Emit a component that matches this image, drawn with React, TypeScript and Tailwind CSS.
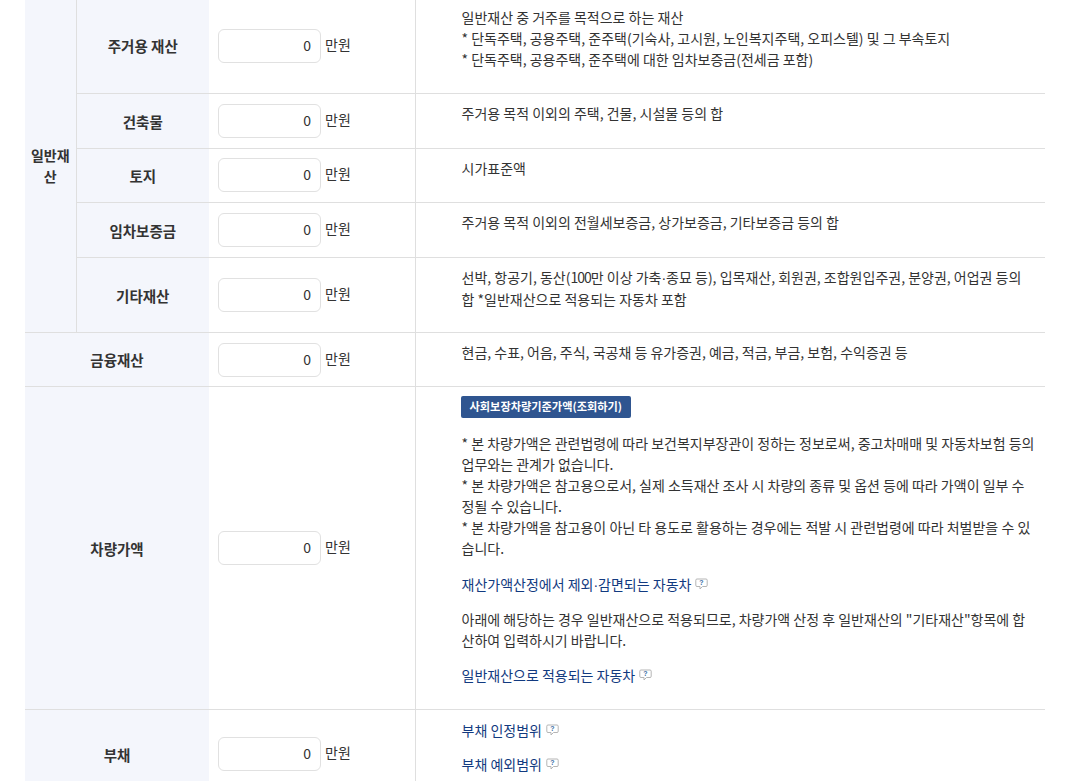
const font = "font-['Noto_Sans_CJK_KR','Noto_Sans',sans-serif]";

function Money() {
  return (
    <div className="flex items-center">
      <input
        readOnly
        value="0"
        className="w-[103px] h-[34px] rounded-[6px] border border-[#e1e1e1] bg-white pl-[9px] pr-[9px] pb-[2px] text-right text-[14px] text-[#333] outline-none"
      />
      <span className="ml-1 mb-[3px] text-[14px] text-[#333]">만원</span>
    </div>
  );
}

function Help() {
  return (
    <svg width="13" height="12" viewBox="0 0 13 12" className="ml-[4px] inline-block align-[0px]" fill="none">
      <path d="M2 1h9a1.200 1.200 0 0 1 1.200 1.200v5A1.200 1.200 0 0 1 11 8.500H7.500L5 11V8.500H2A1.200 1.200 0 0 1 .8 7.200v-5A1.200 1.200 0 0 1 2 1Z" stroke="#b5b5b5" strokeWidth="1" />
      <text x="6.500" y="7.300" textAnchor="middle" fontSize="7" fontWeight="700" fill="#3a6ea5" fontFamily="Liberation Sans, sans-serif">?</text>
    </svg>
  );
}

function HelpLink({ children }: { children: React.ReactNode }) {
  return (
    <p className="text-[#123a80]">
      {children}
      <Help />
    </p>
  );
}

function Dot() {
  return <span className="font-['Liberation_Sans']">·</span>;
}

const th = "bg-[#f4f6fc] border-b border-[#dfdfdf] text-center align-middle font-bold text-[14.500px] text-[#333] pt-[2px]";
const inputCell = "border-b border-[#dfdfdf] pl-[9px] align-middle";
const desc = "border-b border-l border-[#dfdfdf] pl-[46px] pr-[8px] pt-[9px] pb-[10px] align-top text-[14px] leading-[21px] text-[#333]";

export default function App() {
  return (
    <div className={`${font} bg-white w-[1070px] h-[781px] overflow-hidden px-[25px]`}>
      <table className="w-[1020px] table-fixed border-collapse">
        <colgroup>
          <col className="w-[51px]" />
          <col className="w-[133px]" />
          <col className="w-[206px]" />
          <col />
        </colgroup>
        <tbody>
          <tr className="h-[93px]">
            <th rowSpan={5} className={`${th} !text-[14px] !pt-0 border-r px-1`}>일반재산</th>
            <th className={`${th} !pt-0`}>주거용 재산</th>
            <td className={inputCell}><Money /></td>
            <td className={`${desc} !pt-[7px]`}>
              일반재산 중 거주를 목적으로 하는 재산<br />
              * 단독주택, 공용주택, 준주택(기숙사, 고시원, 노인복지주택, 오피스텔) 및 그 부속토지<br />
              * 단독주택, 공용주택, 준주택에 대한 임차보증금(전세금 포함)
            </td>
          </tr>
          <tr className="h-[55px]">
            <th className={th}>건축물</th>
            <td className={inputCell}><Money /></td>
            <td className={desc}>주거용 목적 이외의 주택, 건물, 시설물 등의 합</td>
          </tr>
          <tr className="h-[54px]">
            <th className={th}>토지</th>
            <td className={inputCell}><Money /></td>
            <td className={desc}>시가표준액</td>
          </tr>
          <tr className="h-[55px]">
            <th className={th}>임차보증금</th>
            <td className={inputCell}><Money /></td>
            <td className={desc}>주거용 목적 이외의 전월세보증금, 상가보증금, 기타보증금 등의 합</td>
          </tr>
          <tr className="h-[75px]">
            <th className={th}>기타재산</th>
            <td className={inputCell}><Money /></td>
            <td className={desc}>
              선박, 항공기, 동산(<span className="tracking-[-1px]">100</span>만 이상 가축<Dot />종묘 등), 입목재산, 회원권, 조합원입주권, 분양권, 어업권 등의<br />
              합 *일반재산으로 적용되는 자동차 포함
            </td>
          </tr>
          <tr className="h-[54px]">
            <th colSpan={2} className={th}>금융재산</th>
            <td className={`${inputCell} pt-px`}><Money /></td>
            <td className={desc}>현금, 수표, 어음, 주식, 국공채 등 유가증권, 예금, 적금, 부금, 보험, 수익증권 등</td>
          </tr>
          <tr className="h-[323px]">
            <th colSpan={2} className={th}>차량가액</th>
            <td className={inputCell}><Money /></td>
            <td className={desc}>
              <button className="-ml-px block h-[22px] rounded-[2px] bg-[#2f5590] px-[9px] text-[11.200px] font-bold leading-[21px] text-white">
                사회보장차량기준가액(조회하기)
              </button>
              <p className="mt-[15px]">
                * 본 차량가액은 관련법령에 따라 보건복지부장관이 정하는 정보로써, 중고차매매 및 자동차보험 등의 업무와는 관계가 없습니다.<br />
                * 본 차량가액은 참고용으로서, 실제 소득재산 조사 시 차량의 종류 및 옵션 등에 따라 가액이 일부 수정될 수 있습니다.<br />
                * 본 차량가액을 참고용이 아닌 타 용도로 활용하는 경우에는 적발 시 관련법령에 따라 처벌받을 수 있습니다.
              </p>
              <div className="mt-[15px]"><HelpLink>재산가액산정에서 제외<Dot />감면되는 자동차</HelpLink></div>
              <p className="mt-[13px]">
                아래에 해당하는 경우 일반재산으로 적용되므로, 차량가액 산정 후 일반재산의 "기타재산"항목에 합산하여 입력하시기 바랍니다.
              </p>
              <div className="mt-[14px]"><HelpLink>일반재산으로 적용되는 자동차</HelpLink></div>
            </td>
          </tr>
          <tr>
            <th colSpan={2} className={th}>부채</th>
            <td className={inputCell}><Money /></td>
            <td className={`${desc} !pt-[10px]`}>
              <HelpLink>부채 인정범위</HelpLink>
              <div className="mt-[13px]"><HelpLink>부채 예외범위</HelpLink></div>
              <div className="h-[13px]" />
            </td>
          </tr>
        </tbody>
      </table>
    </div>
  );
}
